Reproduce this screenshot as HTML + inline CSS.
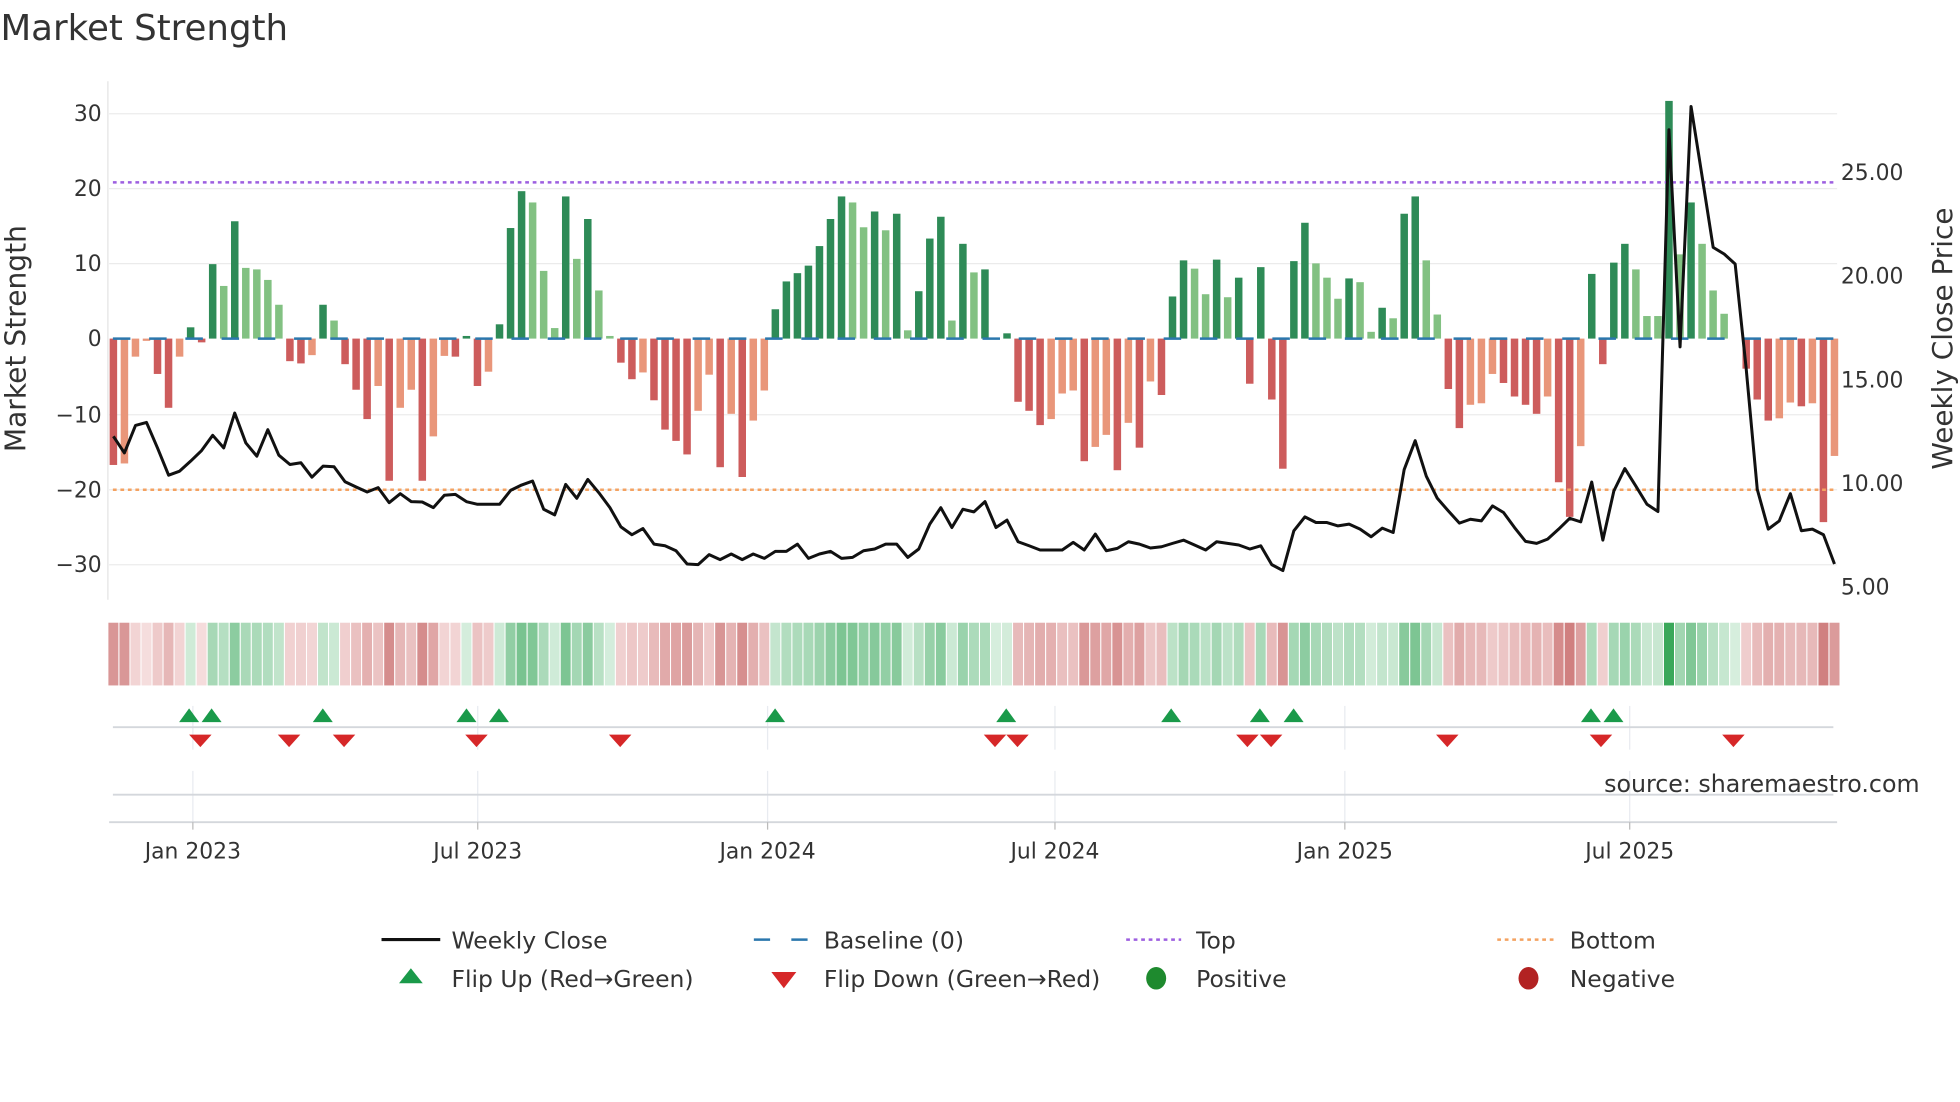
<!DOCTYPE html>
<html><head><meta charset="utf-8"><style>
html,body{margin:0;padding:0;background:#fff;width:1960px;height:1102px;overflow:hidden}
svg{display:block}
text{font-family:"DejaVu Sans","Liberation Sans",sans-serif;fill:#333}
</style></head><body>
<svg id="s" width="1960" height="1102" viewBox="0 0 1568 882" xmlns="http://www.w3.org/2000/svg">
<text x="0" y="32" font-size="28.5" fill="#333">Market Strength</text>
<g id="grid" stroke="#ebebeb" stroke-width="1">
<line x1="87" y1="91" x2="1470" y2="91"/><line x1="87" y1="151" x2="1470" y2="151"/>
<line x1="87" y1="211" x2="1470" y2="211"/><line x1="87" y1="332" x2="1470" y2="332"/>
<line x1="87" y1="392" x2="1470" y2="392"/><line x1="87" y1="452" x2="1470" y2="452"/>
</g>
<line x1="86" y1="65" x2="86" y2="480" stroke="#e4e4e4"/>
<g font-size="17.5" text-anchor="end">
<text x="81" y="97">30</text><text x="81" y="157">20</text><text x="81" y="217">10</text>
<text x="81" y="277">0</text><text x="81" y="338">−10</text><text x="81" y="398">−20</text><text x="81" y="458">−30</text>
</g>
<g font-size="17.5">
<text x="1473" y="144">25.00</text><text x="1473" y="227">20.00</text><text x="1473" y="310">15.00</text>
<text x="1473" y="393">10.00</text><text x="1473" y="476">5.00</text>
</g>
<text transform="translate(20,271) rotate(-90)" font-size="22.5" text-anchor="middle">Market Strength</text>
<text transform="translate(1562,271) rotate(-90)" font-size="22.3" text-anchor="middle">Weekly Close Price</text>
<g id="bars"></g>
<line x1="90" y1="146" x2="1470" y2="146" stroke="#9d5fe0" stroke-width="2" stroke-dasharray="3,3"/>
<line x1="90" y1="392" x2="1470" y2="392" stroke="#f4a261" stroke-width="2" stroke-dasharray="3,3"/>
<line x1="90" y1="271" x2="1470" y2="271" stroke="#2b77ad" stroke-width="2" stroke-dasharray="14,15"/>
<polyline id="pl" fill="none" stroke="#111" stroke-width="2.4" stroke-linejoin="round"/>
<g id="strip"></g>
<g stroke="#e8ebf0" stroke-width="1">
<line x1="154" y1="565" x2="154" y2="600"/><line x1="382" y1="565" x2="382" y2="600"/><line x1="614" y1="565" x2="614" y2="600"/>
<line x1="844" y1="565" x2="844" y2="600"/><line x1="1076" y1="565" x2="1076" y2="600"/><line x1="1304" y1="565" x2="1304" y2="600"/>
<line x1="154" y1="617" x2="154" y2="658"/><line x1="382" y1="617" x2="382" y2="658"/><line x1="614" y1="617" x2="614" y2="658"/>
<line x1="844" y1="617" x2="844" y2="658"/><line x1="1076" y1="617" x2="1076" y2="658"/><line x1="1304" y1="617" x2="1304" y2="658"/>
</g>
<line x1="90" y1="582" x2="1467" y2="582" stroke="#d4d7dc" stroke-width="1.5"/>
<line x1="90" y1="636" x2="1467" y2="636" stroke="#d4d7dc" stroke-width="1.5"/>
<line x1="87" y1="658" x2="1470" y2="658" stroke="#d4d7dc" stroke-width="1.5"/>
<g stroke="#bbb" stroke-width="1">
<line x1="154" y1="658" x2="154" y2="664"/><line x1="382" y1="658" x2="382" y2="664"/><line x1="614" y1="658" x2="614" y2="664"/>
<line x1="844" y1="658" x2="844" y2="664"/><line x1="1076" y1="658" x2="1076" y2="664"/><line x1="1304" y1="658" x2="1304" y2="664"/>
</g>
<g id="marks"></g>
<text x="1536" y="634" font-size="19" fill="#999" text-anchor="end">source: sharemaestro.com</text>
<g font-size="17.5" text-anchor="middle">
<text x="154" y="687">Jan 2023</text><text x="382" y="687">Jul 2023</text><text x="614" y="687">Jan 2024</text>
<text x="844" y="687">Jul 2024</text><text x="1076" y="687">Jan 2025</text><text x="1304" y="687">Jul 2025</text>
</g>
<g font-size="18.8">
<line x1="305" y1="752" x2="352" y2="752" stroke="#111" stroke-width="2.5"/>
<text x="361" y="759">Weekly Close</text>
<line x1="603" y1="752" x2="648" y2="752" stroke="#2b77ad" stroke-width="2" stroke-dasharray="13,17"/>
<text x="659" y="759">Baseline (0)</text>
<line x1="901" y1="752" x2="945" y2="752" stroke="#9d5fe0" stroke-width="2" stroke-dasharray="3,3"/>
<text x="957" y="759">Top</text>
<line x1="1198" y1="752" x2="1243" y2="752" stroke="#f4a261" stroke-width="2" stroke-dasharray="3,3"/>
<text x="1256" y="759">Bottom</text>
<polygon points="319,787 338,787 328.5,775" fill="#1a9a4a"/>
<text x="361" y="790">Flip Up (Red→Green)</text>
<polygon points="617,778 637,778 627,791" fill="#d62728"/>
<text x="659" y="790">Flip Down (Green→Red)</text>
<ellipse cx="925" cy="783" rx="8" ry="9" fill="#1e8a2e"/>
<text x="957" y="790">Positive</text>
<ellipse cx="1223" cy="783" rx="8" ry="9" fill="#b22222"/>
<text x="1256" y="790">Negative</text>
</g>
</svg>
<script>
var V="-16.8R -16.6r -2.4r -0.3r -4.7R -9.2R -2.4r 1.5G -0.5R 9.9G 7g 15.6G 9.4g 9.2g 7.8g 4.5g -3R -3.3R -2.2r 4.5G 2.4g -3.4R -6.8R -10.7R -6.3r -18.9R -9.2r -6.8r -18.9R -13r -2.3r -2.4R 0.35G -6.3R -4.4r 1.9G 14.7G 19.6G 18.1g 9g 1.4g 18.9G 10.6g 15.9G 6.4g 0.35g -3.2R -5.4R -4.5r -8.2R -12.1R -13.6R -15.4R -9.6r -4.8r -17.1R -10r -18.4R -10.9r -6.9r 3.9G 7.6G 8.7G 9.7G 12.3G 15.9G 18.9G 18.1g 14.8g 16.9G 14.4g 16.6G 1.1g 6.3G 13.3G 16.2G 2.4g 12.6G 8.8g 9.2G 0G 0.7G -8.4R -9.6R -11.5R -10.7r -7.3r -6.9r -16.3R -14.4r -12.8r -17.5R -11.2r -14.5R -5.7r -7.5R 5.6G 10.4G 9.3g 5.9g 10.5G 5.5g 8.1G -6R 9.5G -8.1R -17.3R 10.3G 15.4G 10g 8.1g 5.3g 8G 7.5g 0.9g 4.1G 2.7g 16.6G 18.9G 10.4g 3.2g -6.7R -11.9R -8.8r -8.6r -4.7r -5.9R -7.7R -8.8R -10R -7.7r -19.1R -23.7R -14.3r 8.6G -3.4R 10.1G 12.6G 9.2g 3g 3g 31.6G 11.2g 18.1G 12.6g 6.4g 3.3g 0g -4R -8.1R -10.9R -10.6r -8.5r -9R -8.6r -24.4R -15.6r".split(" ");
var L=[1075,1125,1042,1033,1110,1192,1180,1150,1118,1072,1110,1005,1095,1135,1055,1132,1160,1155,1198,1165,1167,1212,1228,1243,1230,1275,1248,1272,1273,1290,1253,1250,1272,1280,1280,1280,1238,1222,1210,1295,1312,1220,1262,1205,1245,1290,1348,1372,1353,1400,1405,1420,1460,1462,1432,1447,1430,1447,1430,1443,1422,
1422,1400,1443,1430,1422,1443,1440,1420,1415,1400,1400,1440,1415,1340,1290,1350,1295,1303,1272,1350,1328,1393,1405,1418,1418,1418,1395,1418,1370,1420,1413,1393,1400,1412,1408,1398,1388,1403,1418,1393,1398,1403,1415,1405,1462,1480,1360,1318,1335,1335,1345,1340,1355,1378,
1352,1365,1175,1088,1195,1262,1300,1337,1325,1330,1285,1305,1350,1392,1398,1385,1355,1322,1333,1213,1388,1240,1172,1225,1280,1302,150,805,80,290,505,525,555,870,1235,1355,1330,1248,1360,1355,1372,1460];
var NS="http://www.w3.org/2000/svg";
function el(p,t,a){var e=document.createElementNS(NS,t);for(var k in a)e.setAttribute(k,a[k]);p.appendChild(e);return e;}
var bars=document.getElementById("bars"),strip=document.getElementById("strip"),marks=document.getElementById("marks");
var col={G:"#2e8b57",g:"#82c182",R:"#cd5c5c",r:"#e9967a"};
function mix(a,b,t){var r=[];for(var i=0;i<3;i++)r.push(Math.round(a[i]+(b[i]-a[i])*t));return "rgb("+r.join(",")+")";}
var pts=[];
for(var i=0;i<V.length;i++){
 var s=V[i],c=s.slice(-1),v=parseFloat(s),x=90.4+i*8.83;
 var y0=271,y1=271-v*6.02;
 if(Math.abs(v)>0.05)el(bars,"rect",{x:x-3,y:Math.min(y0,y1),width:6,height:Math.abs(y1-y0),fill:col[c]});
 var t=Math.min(Math.abs(v)/22,1),f;
 if(v>=0) f=(v>25)?"#3aa85a":mix([214,238,221],[110,190,135],t);
 else f=mix([246,222,222],[208,128,128],t);
 el(strip,"rect",{x:x-4.4,y:498,width:8.83,height:51,fill:f,stroke:"#fff","stroke-width":0.8});
 pts.push(x.toFixed(1)+","+(64+L[i]/3.769).toFixed(1));
}
document.getElementById("pl").setAttribute("points",pts.join(" "));
[151,169,258,373,399,620,805,937,1008,1035,1273,1291].forEach(function(x){el(marks,"polygon",{points:(x-8)+",578 "+(x+8)+",578 "+x+",567",fill:"#1a9a4a"});});
[160,231,275,381,496,796,814,998,1017,1158,1281,1387].forEach(function(x){el(marks,"polygon",{points:(x-9)+",588 "+(x+9)+",588 "+x+",598",fill:"#d62728"});});
</script>
</body></html>
